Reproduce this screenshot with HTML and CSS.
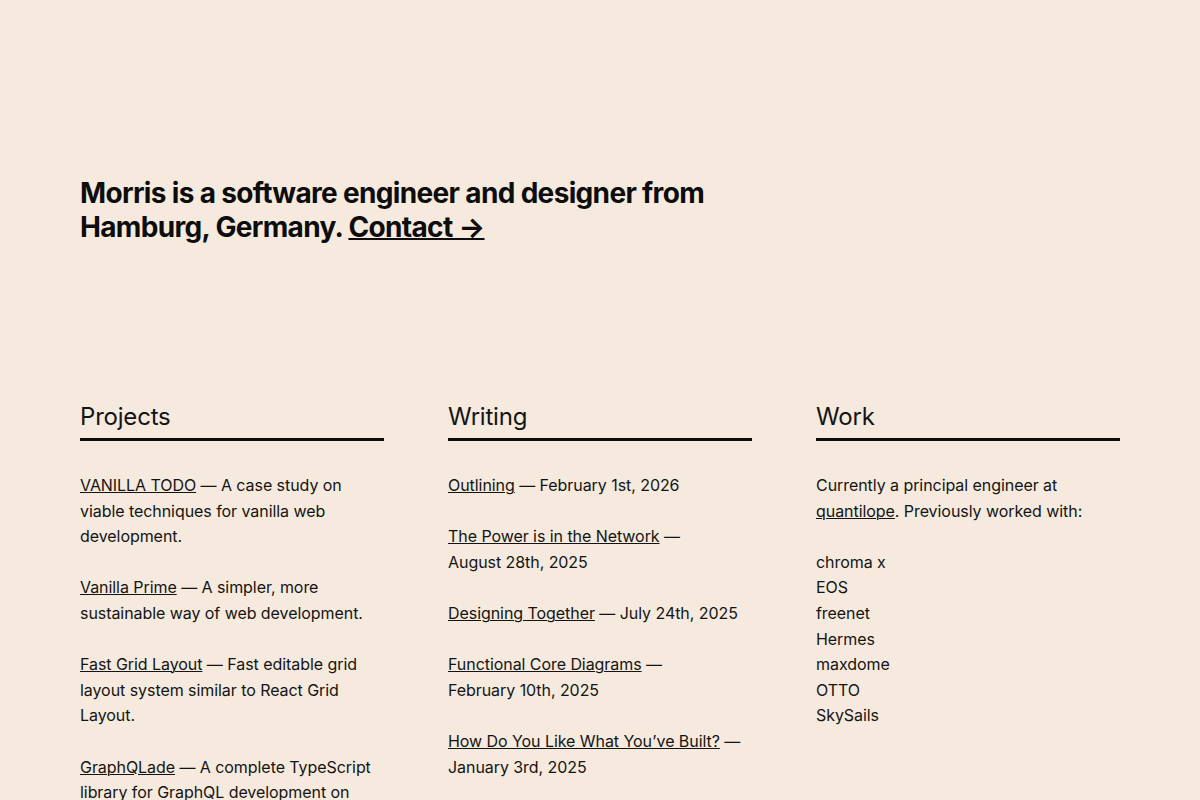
FILE: index.html
```html
<!DOCTYPE html>
<html lang="en">
<head>
    <meta charset="UTF-8">
    <meta name="viewport" content="width=device-width, initial-scale=1.0">
    <title>Morris Brodersen</title>
    <link rel="stylesheet" href="styles.css">
</head>
<body>
    <div class="page">
        <header class="intro">
            <h1>Morris is a software engineer and designer from Hamburg, Germany. <a href="#contact">Contact →</a></h1>
        </header>

        <main class="columns">
            <section class="column">
                <h2>Projects</h2>
                <p><a href="#">VANILLA TODO</a> — A case study on viable techniques for vanilla web development.</p>
                <p><a href="#">Vanilla Prime</a> — A simpler, more sustainable way of web development.</p>
                <p><a href="#">Fast Grid Layout</a> — Fast editable grid layout system similar to React Grid Layout.</p>
                <p><a href="#">GraphQLade</a> — A complete TypeScript library for GraphQL development on Node.js and in the browser.</p>
            </section>

            <section class="column">
                <h2>Writing</h2>
                <p><a href="#">Outlining</a> — <span class="date">February 1st, 2026</span></p>
                <p><a href="#">The Power is in the Network</a> — <span class="date">August 28th, 2025</span></p>
                <p><a href="#">Designing Together</a> — <span class="date">July 24th, 2025</span></p>
                <p><a href="#">Functional Core Diagrams</a> — <span class="date">February 10th, 2025</span></p>
                <p><a href="#">How Do You Like What You’ve Built?</a> — <span class="date">January 3rd, 2025</span></p>
            </section>

            <section class="column">
                <h2>Work</h2>
                <p>Currently a principal engineer at <a href="#">quantilope</a>. Previously worked with:</p>
                <ul class="clients">
                    <li>chroma x</li>
                    <li>EOS</li>
                    <li>freenet</li>
                    <li>Hermes</li>
                    <li>maxdome</li>
                    <li>OTTO</li>
                    <li>SkySails</li>
                </ul>
            </section>
        </main>
    </div>
</body>
</html>
```

FILE: styles.css
```css
body {
    font-family: Inter, "Noto Sans", sans-serif;
    background-color: #f5eadd;
    color: #141414;
    margin: 0;
    padding: 0;
}

a {
    color: inherit;
    text-decoration: underline;
    text-decoration-thickness: 1px;
}

.page {
    padding: 176px 80px 0;
}

.intro {
    max-width: 720px;
}

h1 {
    font-size: 28px;
    line-height: 34px;
    font-weight: 700;
    margin: 0;
    letter-spacing: -0.66px;
    color: #0d0d0d;
}

h1 a {
    text-decoration-thickness: 2px;
}

.columns {
    display: grid;
    grid-template-columns: repeat(3, 1fr);
    gap: 64px;
    margin-top: 157px;
}

h2 {
    font-size: 24px;
    font-weight: 400;
    line-height: 32px;
    letter-spacing: -0.2px;
    margin: 0 0 32px;
    padding-bottom: 5px;
    border-bottom: 3px solid #0d0d0d;
}

.column p {
    font-size: 16px;
    line-height: 25.6px;
    letter-spacing: -0.06px;
    margin: 0 0 25.6px;
}

.date {
    white-space: nowrap;
}

.clients {
    list-style: none;
    margin: 0;
    padding: 0;
    font-size: 16px;
    line-height: 25.6px;
    letter-spacing: -0.06px;
}
```
